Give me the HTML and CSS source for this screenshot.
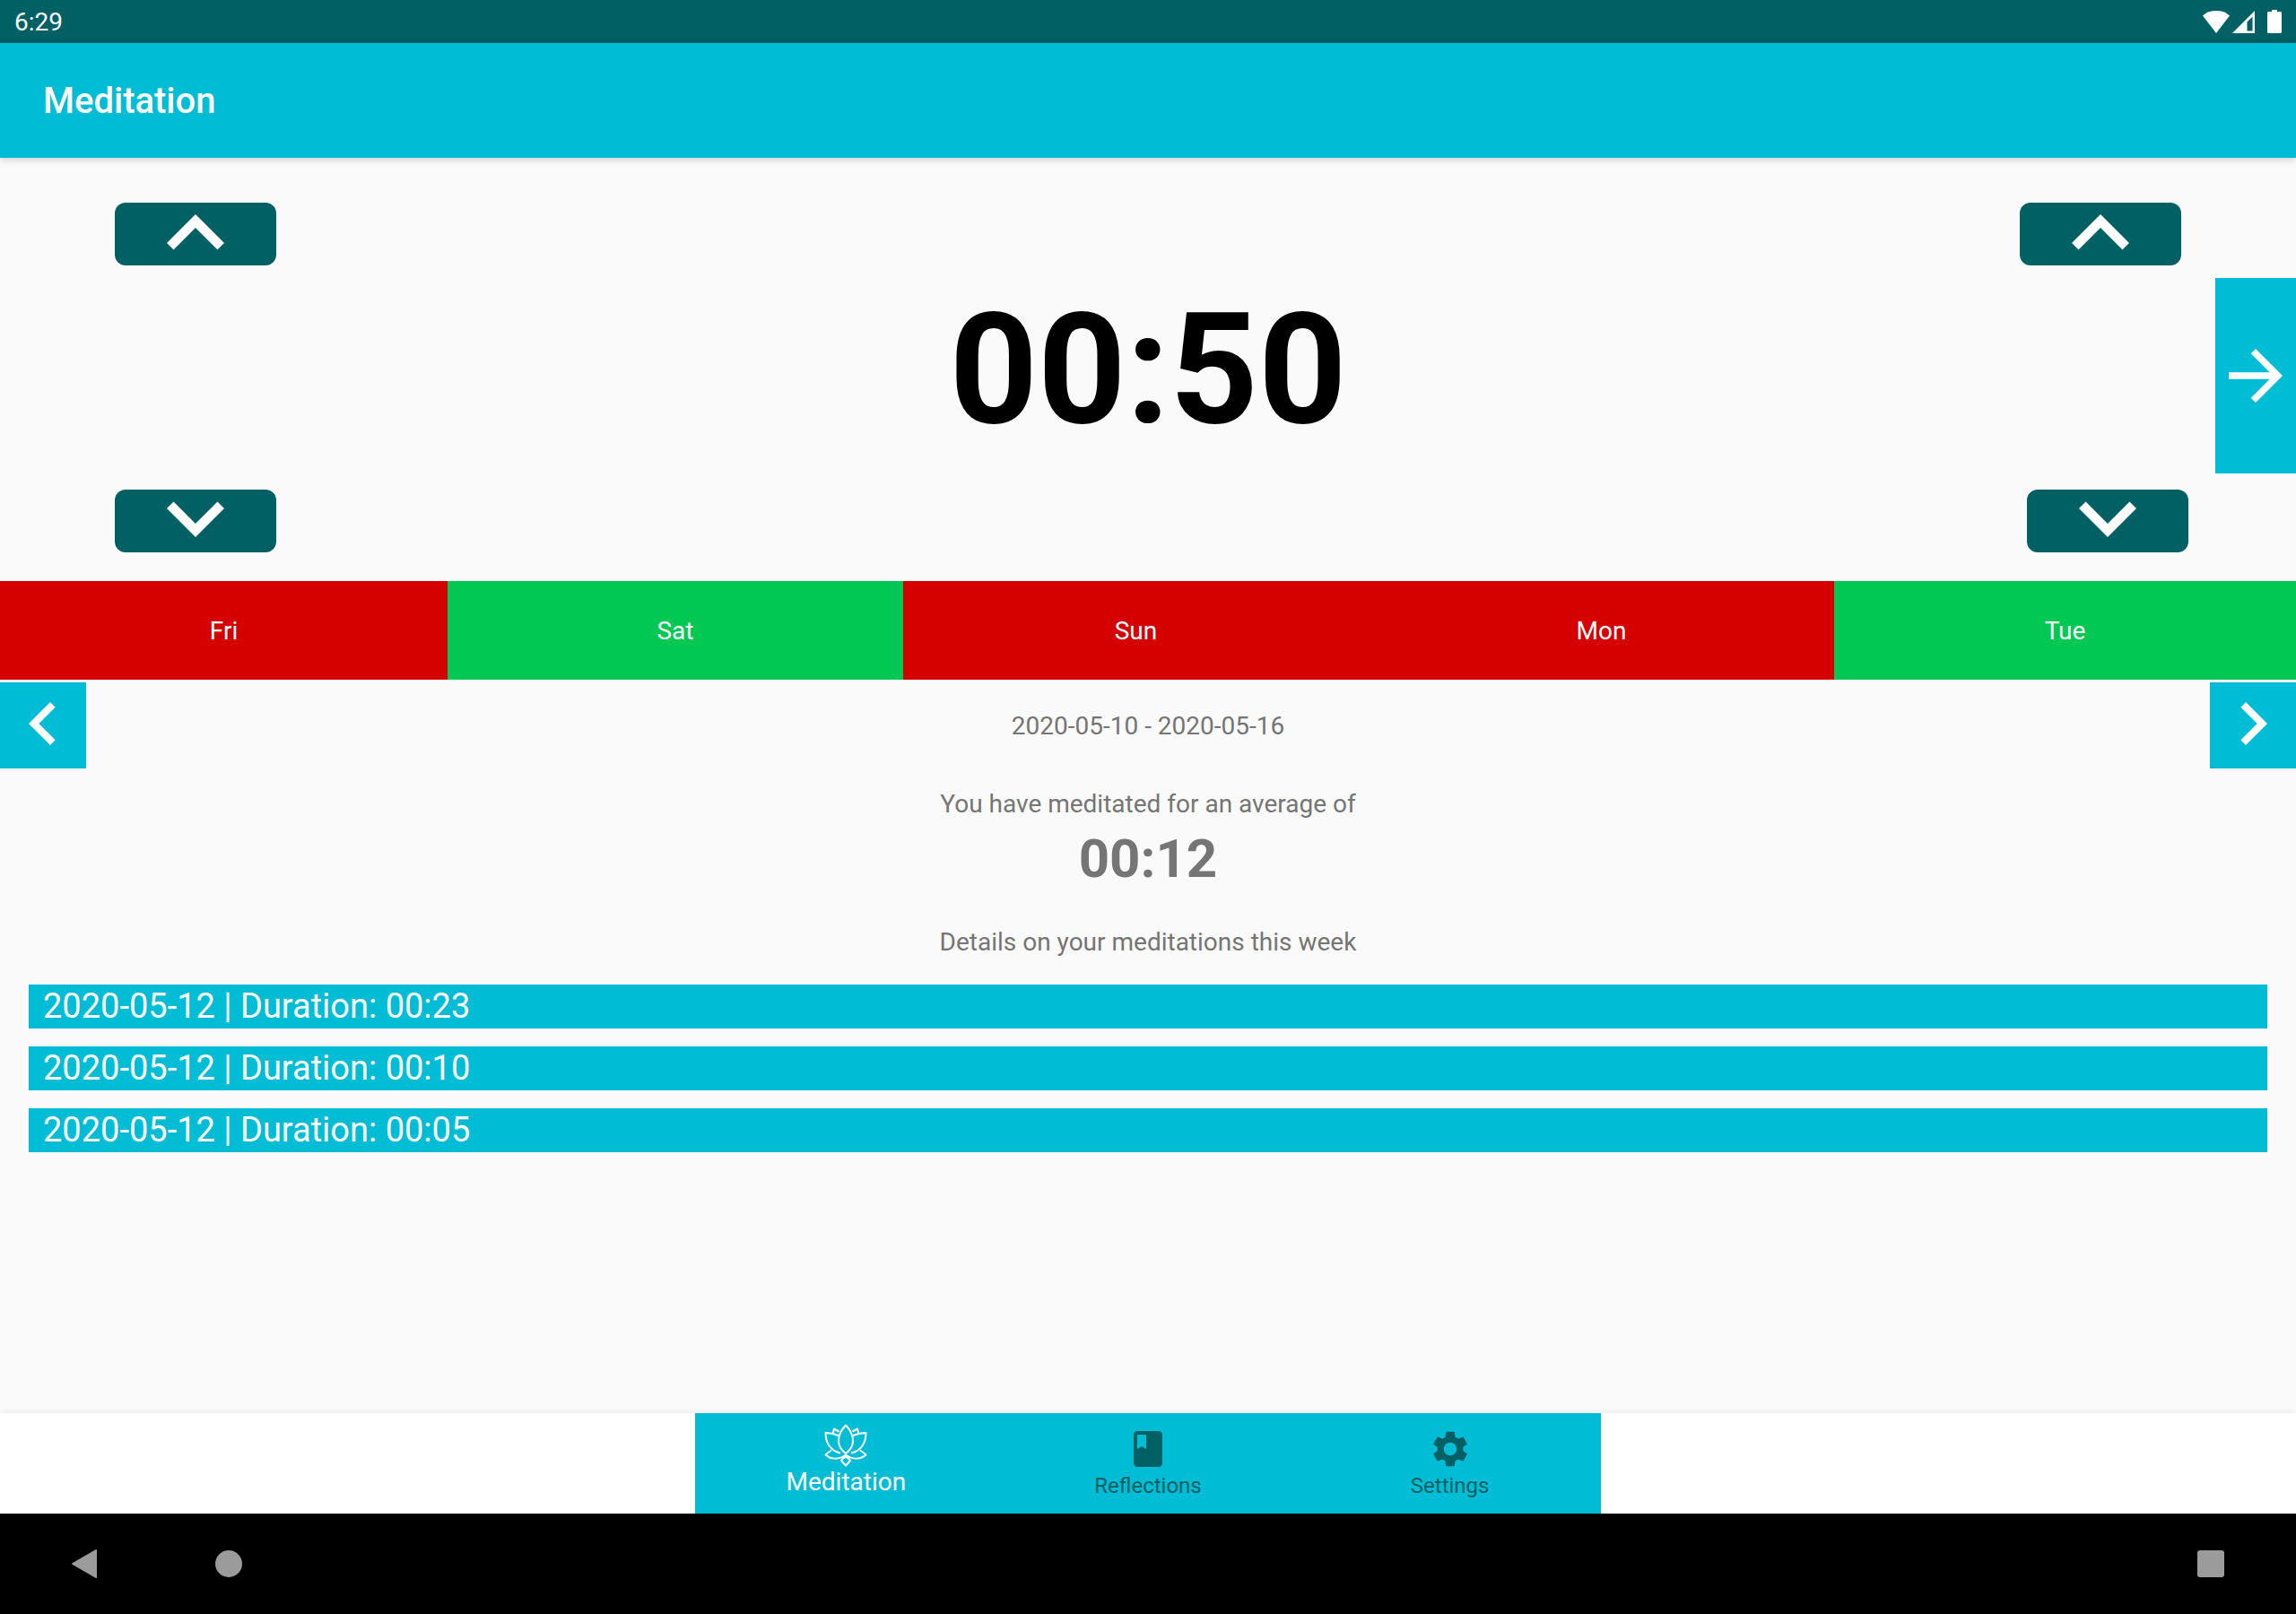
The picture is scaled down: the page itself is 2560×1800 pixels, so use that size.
FILE: index.html
```html
<!DOCTYPE html>
<html lang="en">
<head>
    <meta charset="UTF-8">
    <title>Meditation</title>
    <link rel="stylesheet" href="styles.css">
</head>
<body>
    <div class="status-bar">
        <span class="status-time">6:29</span>
        <div class="status-icons">
            <svg class="icon-wifi" width="30" height="25" viewBox="0 0 30 25"><path d="M15 0C9 0 4 1.800 0 5.500L15 25 30 5.500C26 1.800 21 0 15 0z"/></svg>
            <svg class="icon-signal" width="25" height="25" viewBox="0 0 25 25"><path fill-rule="evenodd" d="M25 0V25H0zM22.500 6.500L16.500 12.500V22.500H22.500z"/></svg>
            <svg class="icon-battery" width="16" height="26" viewBox="0 0 16 26"><path d="M5 0h6v2h3.500c.8 0 1.500.7 1.500 1.500V24.500c0 .8-.7 1.500-1.500 1.500H1.500C.7 26 0 25.300 0 24.500V3.500C0 2.700.7 2 1.500 2H5z"/></svg>
        </div>
    </div>
    <header class="app-bar">Meditation</header>

    <main class="content">
        <section class="timer">
            <div class="spin-col spin-left">
                <button class="spin-btn"><svg width="64" height="40" viewBox="6 8 12 7.500"><path d="M7.410 15.410L12 10.830l4.590 4.580L18 14l-6-6-6 6z"/></svg></button>
                <button class="spin-btn"><svg width="64" height="40" viewBox="6 8.500 12 7.500"><path d="M7.410 8.590L12 13.170l4.590-4.580L18 10l-6 6-6-6z"/></svg></button>
            </div>
            <div class="clock">00:50</div>
            <div class="spin-col spin-right">
                <button class="spin-btn"><svg width="64" height="40" viewBox="6 8 12 7.500"><path d="M7.410 15.410L12 10.830l4.590 4.580L18 14l-6-6-6 6z"/></svg></button>
                <button class="spin-btn spin-btn-down"><svg width="64" height="40" viewBox="6 8.500 12 7.500"><path d="M7.410 8.590L12 13.170l4.590-4.580L18 10l-6 6-6-6z"/></svg></button>
            </div>
            <button class="start-btn"><svg width="96" height="96" viewBox="0 0 24 24"><path d="M12 4l-1.410 1.410L16.170 11H4v2h12.170l-5.580 5.590L12 20l8-8z"/></svg></button>
        </section>

        <section class="week">
            <div class="day missed">Fri</div>
            <div class="day done">Sat</div>
            <div class="day missed">Sun</div>
            <div class="day missed">Mon</div>
            <div class="day done">Tue</div>
        </section>

        <section class="week-nav">
            <button class="page-btn"><svg width="96" height="96" viewBox="0 0 24 24"><path d="M15.410 7.410L14 6l-6 6 6 6 1.410-1.410L10.830 12z"/></svg></button>
            <span class="grey-text">2020-05-10 - 2020-05-16</span>
            <button class="page-btn"><svg width="96" height="96" viewBox="0 0 24 24"><path d="M8.590 16.590L10 18l6-6-6-6-1.410 1.410L13.170 12z"/></svg></button>
        </section>

        <section class="summary">
            <p class="grey-text">You have meditated for an average of</p>
            <p class="average">00:12</p>
            <p class="grey-text details-title">Details on your meditations this week</p>
        </section>

        <ul class="sessions">
            <li>2020-05-12 | Duration: 00:23</li>
            <li>2020-05-12 | Duration: 00:10</li>
            <li>2020-05-12 | Duration: 00:05</li>
        </ul>
    </main>

    <div class="bottom-area">
        <nav class="tabs">
            <a class="tab active">
                <svg width="48" height="48" viewBox="0 0 48 48" fill="none" stroke="#fff" stroke-width="2" stroke-linejoin="round">
                    <path d="M24 1.500C19 6.500 16 13 16 19C16 25 20 30 24 33C28 30 32 25 32 19C32 13 29 6.500 24 1.500z"/>
                    <path d="M16 13C11 11 6 10 1.500 10C1.500 20 6 30 18 32.500"/>
                    <path d="M32 13C37 11 42 10 46.500 10C46.500 20 42 30 30 32.500"/>
                    <path d="M16.500 8.500L11 5.500L9.500 11"/>
                    <path d="M31.500 8.500L37 5.500L38.500 11"/>
                    <path d="M8 29.500C5.500 31 3.500 32.500 1.500 34.500C7 39.500 16 40.500 24 34.500C32 40.500 41 39.500 46.500 34.500C44.500 32.500 42.500 31 40 29.500"/>
                    <path d="M24 46.500L19 41C20 39 22 37.500 24 36.500C26 37.500 28 39 29 41z"/>
                </svg>
                <span>Meditation</span>
            </a>
            <a class="tab">
                <svg width="48" height="48" viewBox="0 0 24 24"><path d="M18 2H6c-1.100 0-2 .9-2 2v16c0 1.100.9 2 2 2h12c1.100 0 2-.9 2-2V4c0-1.100-.9-2-2-2zM6 4h5v8l-2.500-1.500L6 12V4z"/></svg>
                <span>Reflections</span>
            </a>
            <a class="tab">
                <svg width="48" height="48" viewBox="0 0 24 24"><path d="M19.140 12.940c.04-.3.06-.61.06-.94 0-.32-.02-.64-.07-.94l2.030-1.580c.18-.14.23-.41.12-.61l-1.920-3.320c-.12-.22-.37-.29-.59-.22l-2.390.96c-.5-.38-1.030-.7-1.620-.94l-.36-2.540c-.04-.24-.24-.41-.48-.41h-3.840c-.24 0-.43.17-.47.41l-.36 2.540c-.59.24-1.130.57-1.620.94l-2.390-.96c-.22-.08-.47 0-.59.22L2.740 8.870c-.12.21-.08.47.12.61l2.030 1.580c-.05.3-.09.63-.09.94s.02.64.07.94l-2.030 1.580c-.18.14-.23.41-.12.61l1.920 3.320c.12.22.37.29.59.22l2.390-.96c.5.38 1.030.7 1.620.94l.36 2.540c.05.24.24.41.48.41h3.840c.24 0 .44-.17.47-.41l.36-2.540c.59-.24 1.130-.56 1.620-.94l2.390.96c.22.08.47 0 .59-.22l1.920-3.320c.12-.22.07-.47-.12-.61l-2.010-1.580zM12 15.600c-1.980 0-3.600-1.620-3.600-3.600s1.620-3.600 3.600-3.600 3.600 1.620 3.600 3.600-1.620 3.600-3.600 3.600z"/></svg>
                <span>Settings</span>
            </a>
        </nav>
    </div>

    <div class="system-nav">
        <svg class="sys-back" width="28" height="32" viewBox="0 0 28 32"><path d="M27 0c.6 0 1 .5 1 1V31c0 .8-.8 1.200-1.500.8L.6 16.800c-.7-.4-.7-1.200 0-1.600L26.500.2c.2-.1.3-.2.5-.2z"/></svg>
        <span class="sys-home"></span>
        <span class="sys-recent"></span>
    </div>
</body>
</html>
```

FILE: styles.css
```css
* {
    box-sizing: border-box;
}
html, body {
    margin: 0;
    padding: 0;
}
body {
    width: 2560px;
    height: 1800px;
    display: flex;
    flex-direction: column;
    font-family: Roboto, "Liberation Sans", sans-serif;
    background-color: #fafafa;
    overflow: hidden;
}
button {
    border: none;
    padding: 0;
    display: flex;
    align-items: center;
    justify-content: center;
}
svg {
    display: block;
    fill: #fff;
}

/* status bar */
.status-bar {
    height: 48px;
    flex: none;
    background-color: #006064;
    color: #fff;
    display: flex;
    align-items: center;
    justify-content: space-between;
    padding: 0 16px;
}
.status-time {
    font-size: 28px;
}
.status-icons {
    display: flex;
    align-items: center;
}
.icon-signal {
    margin-left: 3px;
}
.icon-battery {
    margin-left: 14px;
}

/* app bar */
.app-bar {
    height: 128px;
    flex: none;
    background-color: #00bcd4;
    color: #fff;
    font-size: 40px;
    font-weight: 500;
    display: flex;
    align-items: center;
    padding-left: 48px;
    box-shadow: 0 2px 8px rgba(0, 0, 0, 0.18);
    position: relative;
}

.content {
    flex: 1;
}

/* timer */
.timer {
    height: 472px;
    display: grid;
    grid-template-columns: 128px 180px 1fr 188px 30px 90px;
}
.spin-col {
    display: flex;
    flex-direction: column;
    justify-content: space-between;
    padding: 50px 0 32px;
}
.spin-left {
    grid-column: 2;
}
.spin-right {
    grid-column: 4;
}
.spin-btn {
    width: 180px;
    height: 70px;
    background-color: #006064;
    border-radius: 12px;
    padding-bottom: 4px;
}
.spin-btn-down {
    align-self: flex-end;
}
.clock {
    grid-column: 3;
    font-size: 172px;
    font-weight: 700;
    color: #000;
    text-align: center;
    line-height: 472px;
    height: 472px;
}
.start-btn {
    grid-column: 6;
    height: 218px;
    margin-top: 134px;
    background-color: #00bcd4;
}

/* week strip */
.week {
    height: 110px;
    display: grid;
    grid-template-columns: 499px 508px 519px 519px 515px;
}
.day {
    color: #fff;
    font-size: 28px;
    display: flex;
    align-items: center;
    justify-content: center;
}
.missed {
    background-color: #d50000;
}
.done {
    background-color: #00c853;
}

.week-nav {
    display: flex;
    align-items: center;
    justify-content: space-between;
    margin-top: 3px;
}
.page-btn {
    width: 96px;
    height: 96px;
    background-color: #00bcd4;
    padding-bottom: 4px;
    overflow: hidden;
}
.grey-text {
    font-size: 28px;
    color: #757575;
}

.summary {
    text-align: center;
}
.summary p {
    margin: 0;
}
.summary > p:first-child {
    margin-top: 23px;
}
.average {
    font-size: 60px;
    font-weight: 700;
    color: #757575;
    line-height: 70px;
    margin-top: 10px !important;
}
.details-title {
    margin-top: 41px !important;
}

/* session list */
.sessions {
    list-style: none;
    margin: 31px 32px 0;
    padding: 0;
    display: flex;
    flex-direction: column;
    gap: 20px;
}
.sessions li {
    height: 49px;
    line-height: 49px;
    background-color: #00bcd4;
    color: #fff;
    font-size: 38px;
    padding-left: 16px;
}

/* bottom tabs */
.bottom-area {
    height: 112px;
    flex: none;
    background-color: #fff;
    display: flex;
    justify-content: center;
    box-shadow: 0 -1px 6px rgba(0, 0, 0, 0.08);
    position: relative;
}
.tabs {
    width: 1010px;
    display: grid;
    grid-template-columns: repeat(3, 1fr);
    background-color: #00bcd4;
}
.tab {
    display: flex;
    flex-direction: column;
    align-items: center;
    color: #006064;
    font-size: 24px;
    padding-top: 16px;
    line-height: 28px;
}
.tab svg {
    fill: #006064;
}
.tab.active {
    color: #fff;
    font-size: 28px;
    padding-top: 12px;
}
.tab.active svg {
    fill: none;
}
.tab span {
    margin-top: 3px;
}

/* android nav */
.system-nav {
    height: 112px;
    flex: none;
    background-color: #000;
    display: flex;
    align-items: center;
    padding-left: 80px;
}
.sys-back {
    fill: #9b9b9b;
}
.sys-home {
    width: 30px;
    height: 30px;
    border-radius: 50%;
    background-color: #9b9b9b;
    margin-left: 132px;
}
.sys-recent {
    width: 30px;
    height: 30px;
    border-radius: 3px;
    background-color: #9b9b9b;
    margin-left: auto;
    margin-right: 80px;
}
```
